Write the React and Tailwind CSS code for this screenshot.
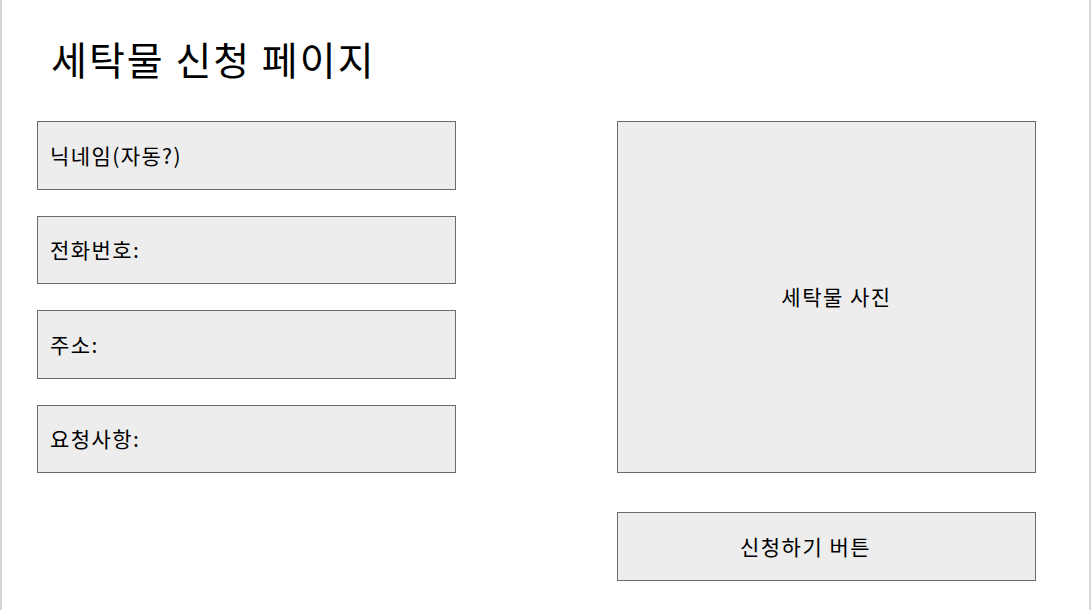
export default function App() {
  const fields = ["닉네임(자동?)", "전화번호:", "주소:", "요청사항:"];

  return (
    <div
      className="w-[1091px] h-[610px] bg-white border-l-2 border-r-2 border-[#d6d6d6] text-black"
      style={{ fontFamily: '"Noto Sans CJK KR", "Noto Sans", sans-serif' }}
    >
      <h1 className="pl-[49px] pt-[31px] text-[39px] leading-[54px] tracking-[2px] font-normal">
        세탁물 신청 페이지
      </h1>

      <div className="flex gap-[161px] pl-[35px] mt-[36px]">
        {/* 입력 항목 */}
        <div className="flex flex-col gap-[26px] w-[419px]">
          {fields.map((label) => (
            <div
              key={label}
              className="h-[68.5px] flex items-center px-[12px] bg-[#ededed] border border-[#6b6b6b] text-[21px] tracking-[1.4px]"
            >
              {label}
            </div>
          ))}
        </div>

        {/* 사진 + 버튼 */}
        <div className="flex flex-col w-[419px]">
          <div className="h-[352px] flex items-center justify-center pl-[20px] bg-[#ededed] border border-[#6b6b6b] text-[21px] tracking-[1.5px]">
            세탁물 사진
          </div>
          <button className="mt-[39px] h-[69px] flex items-center justify-center pr-[42px] bg-[#ededed] border border-[#6b6b6b] text-[21px] tracking-[1.5px]">
            신청하기 버튼
          </button>
        </div>
      </div>
    </div>
  );
}
